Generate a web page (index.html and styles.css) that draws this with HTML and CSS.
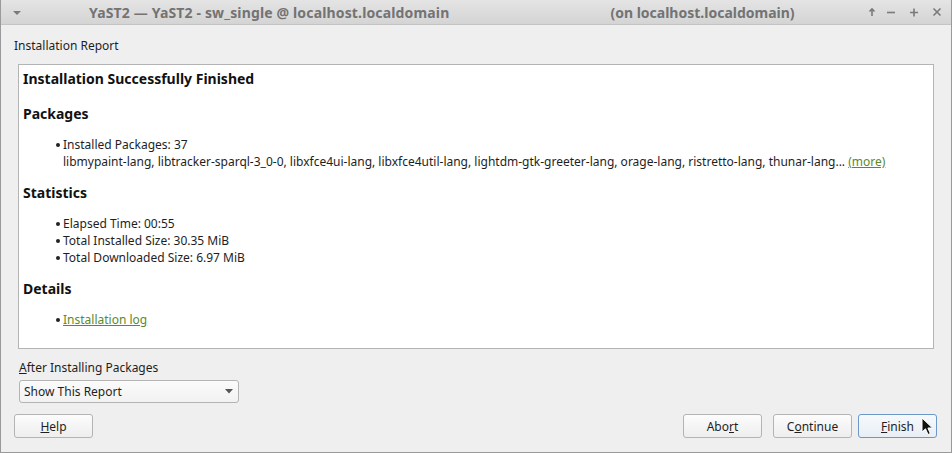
FILE: index.html
```html
<!DOCTYPE html>
<html>
<head>
<meta charset="utf-8">
<link rel="stylesheet" href="styles.css">
</head>
<body>
<div class="window">
  <div class="titlebar">
    <svg class="menu-arrow" width="10" height="6" viewBox="0 0 10 6"><path d="M1 1 L9 1 L5 5 Z" fill="#7a7a7a"/></svg>
    <div class="title"><span class="t1">YaST2 — YaST2 - sw_single @ localhost.localdomain</span><span class="t2">(on localhost.localdomain)</span></div>
    <div class="wbtns">
      <svg width="12" height="12" viewBox="0 0 12 12"><path d="M6 10 V3 M3.5 5.5 L6 3 L8.5 5.5" stroke="#7a7a7a" stroke-width="1.6" fill="none"/></svg>
      <svg width="12" height="12" viewBox="0 0 12 12"><path d="M2 6.5 H10" stroke="#7a7a7a" stroke-width="1.6"/></svg>
      <svg width="12" height="12" viewBox="0 0 12 12"><path d="M2 6.5 H10 M6 2.5 V10.5" stroke="#7a7a7a" stroke-width="1.6"/></svg>
      <svg width="12" height="12" viewBox="0 0 12 12"><path d="M2.5 2.5 L9.5 9.5 M9.5 2.5 L2.5 9.5" stroke="#7a7a7a" stroke-width="1.6"/></svg>
    </div>
  </div>
  <div class="content">
    <div class="heading">Installation Report</div>
    <div class="report">
      <h3 class="first">Installation Successfully Finished</h3>
      <h3>Packages</h3>
      <ul>
        <li>Installed Packages: 37<br>libmypaint-lang, libtracker-sparql-3_0-0, libxfce4ui-lang, libxfce4util-lang, lightdm-gtk-greeter-lang, orage-lang, ristretto-lang, thunar-lang... <a href="#">(more)</a></li>
      </ul>
      <h3>Statistics</h3>
      <ul>
        <li>Elapsed Time: 00:55</li>
        <li>Total Installed Size: 30.35 MiB</li>
        <li>Total Downloaded Size: 6.97 MiB</li>
      </ul>
      <h3>Details</h3>
      <ul>
        <li><a href="#">Installation log</a></li>
      </ul>
    </div>
    <div class="after-label"><u>A</u>fter Installing Packages</div>
    <div class="combo"><span>Show This Report</span><svg width="8" height="5" viewBox="0 0 8 5"><path d="M0 0 H8 L4 4.5 Z" fill="#555"/></svg></div>
    <div class="buttons">
      <button class="btn"><u>H</u>elp</button>
      <div class="spacer"></div>
      <button class="btn">Abo<u>r</u>t</button>
      <button class="btn btn-gap">C<u>o</u>ntinue</button>
      <button class="btn focus"><u>F</u>inish</button>
    </div>
  </div>
  <svg class="cursor" width="14" height="20" viewBox="0 0 14 20"><path d="M1 1 L1 15 L4.5 11.8 L7 17.5 L9.3 16.5 L6.9 11 L11.5 11 Z" fill="#111" stroke="#fff" stroke-width="1"/></svg>
</div>
</body>
</html>
```
FILE: styles.css
```css
html, body {
  margin: 0;
  padding: 0;
  background: #efefef;
}
body {
  font-family: "Noto Sans", "DejaVu Sans", sans-serif;
  font-size: 12px;
  color: #1e1e1e;
}
.window {
  position: relative;
  width: 952px;
  height: 453px;
  box-sizing: border-box;
  border: 1px solid #9a9a9a;
  border-top: none;
  background: #efefef;
  display: flex;
  flex-direction: column;
  overflow: hidden;
}
.titlebar {
  height: 24px;
  flex: none;
  background: linear-gradient(#e4e4e4, #d4d4d4);
  border-bottom: 1px solid #c4c4c4;
  display: flex;
  align-items: center;
  position: relative;
}
.menu-arrow {
  margin-left: 11px;
  margin-top: 1px;
}
.title {
  font-size: 14px;
  font-weight: bold;
  color: #737373;
  margin-left: 67px;
  display: flex;
  white-space: nowrap;
}
.title .t1 {
  letter-spacing: 0.15px;
}
.title .t2 {
  margin-left: 161px;
}
.wbtns {
  margin-left: auto;
  margin-right: 8px;
  display: flex;
  gap: 11px;
  align-items: center;
}
.wbtns svg:first-child {
  margin-right: -4px;
}
.content {
  flex: 1;
  display: flex;
  flex-direction: column;
  padding: 0 14px 0 13px;
}
.heading {
  margin-top: 12px;
  height: 18px;
  line-height: 18px;
}
.report {
  margin-top: 9px;
  margin-left: 4px;
  margin-right: 3px;
  height: 285px;
  box-sizing: border-box;
  border: 1px solid #b4b4b4;
  background: #fff;
  padding: 4px 4px;
}
.report h3 {
  font-size: 14px;
  font-weight: bold;
  margin: 15px 0 12px 0;
  line-height: 20px;
  color: #111;
}
.report h3.first {
  margin-top: 0;
}
.report ul + h3 {
  margin-top: 13px;
}
.report ul {
  margin: 0;
  padding-left: 40px;
  list-style: none;
}
.report li {
  line-height: 17px;
  position: relative;
}
.report li::before {
  content: "";
  position: absolute;
  left: -7px;
  top: 7px;
  width: 4px;
  height: 4px;
  border-radius: 50%;
  background: #222;
}
.report a {
  color: #5a8a2c;
  text-decoration: underline;
}
.after-label {
  margin-top: 10px;
  margin-left: 5px;
  line-height: 18px;
}
.combo {
  margin-top: 3px;
  margin-left: 5px;
  width: 220px;
  height: 23px;
  box-sizing: border-box;
  border: 1px solid #b4b4b4;
  border-radius: 3px;
  background: linear-gradient(#fbfbfb, #f2f2f2);
  display: flex;
  align-items: center;
  justify-content: space-between;
  padding: 0 5px 0 4px;
}
.buttons {
  margin-top: 11px;
  display: flex;
  align-items: center;
}
.spacer {
  flex: 1;
}
.btn {
  width: 79px;
  height: 24px;
  box-sizing: border-box;
  border: 1px solid #b4b4b4;
  border-radius: 3px;
  background: linear-gradient(#fcfcfc, #eeeeee);
  font-family: "Noto Sans", "DejaVu Sans", sans-serif;
  font-size: 12px;
  color: #1e1e1e;
  padding: 0;
}
.btn-gap {
  margin-left: 11px;
}
.btn.focus {
  margin-left: 6px;
  border-color: #6a98c8;
  background: linear-gradient(#f6f9fc, #e8eef5);
}
.cursor {
  position: absolute;
  left: 920px;
  top: 417px;
}
```
